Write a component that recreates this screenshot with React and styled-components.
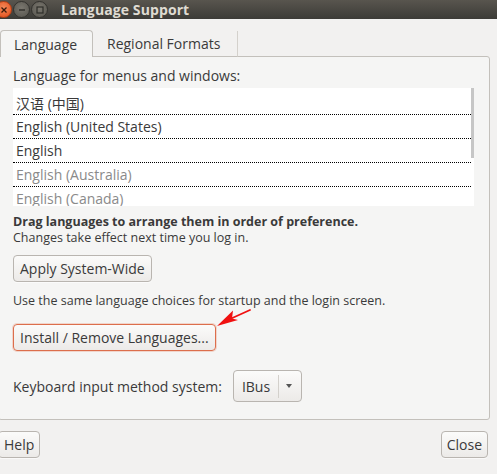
import React from "react";
import styled, { createGlobalStyle } from "styled-components";

const Global = createGlobalStyle`
  html, body { margin: 0; padding: 0; }
  body {
    width: 497px; height: 474px; overflow: hidden;
    background: #f2f1f0;
    font-family: "Open Sans", "Noto Sans CJK SC", sans-serif;
    color: #3a3a3a;
  }
`;

const Window = styled.div`
  width: 497px; height: 474px; display: flex; flex-direction: column;
  background: #f2f1f0; overflow: hidden;
`;

const TitleBar = styled.div`
  height: 19px; flex: none; display: flex; align-items: center;
  background: linear-gradient(#58554e, #3c3b37);
`;

const WinBtn = styled.div`
  width: 17px; height: 17px; border-radius: 50%; flex: none;
  margin-right: 1px; display: flex; align-items: center; justify-content: center;
  background: ${p => p.$close ? "radial-gradient(circle at 50% 40%, #f48a5a, #df4a16)" : "radial-gradient(circle at 50% 40%, #7a776f, #55534c)"};
  border: 1px solid ${p => p.$close ? "#b33d12" : "#33322e"};
  box-sizing: border-box;
  &:first-child { margin-left: -5px; }
`;

const Title = styled.div`
  margin-left: 12px; font-weight: bold; font-size: 14px; color: #dfdbd2;
  font-family: "Open Sans", sans-serif; letter-spacing: 0.1px;
`;

const TabRow = styled.div`
  display: flex; margin-top: 11px; height: 27px; flex: none; position: relative; z-index: 1;
`;

const Tab = styled.div`
  height: 26px; display: flex; align-items: center; padding: 0 0 0 ${p => p.$active ? 13 : 14}px;
  font-size: 14px; color: #3a3a3a;
  box-sizing: border-box;
  ${p => p.$active ? `
    background: #f5f5f4; border: 1px solid #c3c0bb; border-bottom: none;
    border-radius: 4px 4px 0 0; height: 27px; width: 93px;
  ` : `
    width: 145px; border-right: 1px solid #d4d1cc; border-bottom: 1px solid #c3c0bb; margin-top: 1px;
  `}
`;

const Panel = styled.div`
  margin-left: -2px; width: 492px; height: 364px; box-sizing: border-box; flex: none;
  margin-top: -1px;
  background: #f5f5f4; border: 1px solid #c3c0bb; border-radius: 0 3px 3px 3px;
  padding: 10px 0 0 14px; display: flex; flex-direction: column; position: relative;
`;

const Label = styled.div`
  font-size: 14px; line-height: 18px; height: 18px;
`;

const List = styled.div`
  margin-top: 3px; width: 461px; height: 118px; background: #fff; position: relative;
  overflow: hidden; padding-top: 3px; box-sizing: border-box;
`;

const Row = styled.div`
  height: 24px; box-sizing: border-box; padding-left: 3px; font-size: 14px;
  display: flex; align-items: center; width: 458px; flex: none;
  border-bottom: 1px dotted #000;
  color: ${p => p.$dim ? "#8a8a8a" : "#3a3a3a"};
`;

const Scroll = styled.div`
  position: absolute; right: 0; top: 0; width: 3px; height: 70px; background: #c6c6c6;
`;

const Bold = styled.div`
  margin-top: 8px; font-size: 12.5px; font-weight: bold; line-height: 16px;
`;

const Small = styled.div`
  font-size: 12.5px; line-height: 16px; margin-top: ${p => p.$mt || 0}px;
`;

const Button = styled.button`
  font-family: "Open Sans", sans-serif; font-size: 14px; color: #3a3a3a;
  height: 27px; padding: 0 6px; box-sizing: border-box; align-self: flex-start;
  background: linear-gradient(#fbfbfa, #eceae8);
  border: 1px solid ${p => p.$focus ? "#dc6e4c" : "#b9b5b0"};
  border-radius: 4px; cursor: default;
  box-shadow: ${p => p.$focus ? "0 0 0 1px rgba(233,120,80,0.25)" : "0 1px 0 rgba(255,255,255,0.6)"};
  margin-top: ${p => p.$mt || 0}px;
`;

const KbRow = styled.div`
  margin-top: 19px; display: flex; align-items: center; gap: 11px; font-size: 14px;
`;

const Combo = styled.div`
  width: 69px; height: 32px; box-sizing: border-box; border: 1px solid #b9b5b0; border-radius: 4px;
  background: linear-gradient(#fbfbfa, #eceae8); display: flex; align-items: center;
  font-size: 14px;
`;

const ComboText = styled.div`
  padding-left: 8px; width: 36px;
`;

const ComboSep = styled.div`
  width: 1px; height: 23px; background: #d3d0cb;
`;

const Arrow = styled.div`
  margin-left: 7px; width: 0; height: 0;
  border-left: 3.5px solid transparent; border-right: 3.5px solid transparent;
  border-top: 4px solid #555;
`;

const Footer = styled.div`
  display: flex; justify-content: space-between; padding: 11px 9px 0 0;
`;

const FooterBtn = styled(Button)`
  padding: 0 5px; height: 27px;
  ${p => p.$left ? "margin-left: -2px;" : ""}
`;

const RedArrow = styled.svg`
  position: absolute; left: 218px; top: 252px; overflow: visible;
`;

export default function App() {
  return (
    <>
      <Global />
      <Window>
        <TitleBar>
          <WinBtn $close>
            <svg width="8" height="8" viewBox="0 0 8 8"><path d="M1.5 1.5 L6.5 6.5 M6.5 1.5 L1.5 6.5" stroke="#3a1a0a" strokeWidth="1.3" /></svg>
          </WinBtn>
          <WinBtn>
            <svg width="8" height="8" viewBox="0 0 8 8"><path d="M1 4 H7" stroke="#2e2d29" strokeWidth="1.4" /></svg>
          </WinBtn>
          <WinBtn>
            <svg width="8" height="8" viewBox="0 0 8 8"><rect x="1" y="1" width="6" height="6" fill="none" stroke="#2e2d29" strokeWidth="1.2" /></svg>
          </WinBtn>
          <Title>Language Support</Title>
        </TitleBar>
        <TabRow>
          <Tab $active>Language</Tab>
          <Tab>Regional Formats</Tab>
        </TabRow>
        <Panel>
          <Label>Language for menus and windows:</Label>
          <List>
            <Row>汉语 (中国)</Row>
            <Row>English (United States)</Row>
            <Row>English</Row>
            <Row $dim>English (Australia)</Row>
            <Row $dim>English (Canada)</Row>
            <Scroll />
          </List>
          <Bold>Drag languages to arrange them in order of preference.</Bold>
          <Small>Changes take effect next time you log in.</Small>
          <Button $mt={9}>Apply System-Wide</Button>
          <Small $mt={11}>Use the same language choices for startup and the login screen.</Small>
          <Button $focus $mt={15}>Install / Remove Languages...</Button>
          <KbRow>
            Keyboard input method system:
            <Combo>
              <ComboText>IBus</ComboText>
              <ComboSep />
              <Arrow />
            </Combo>
          </KbRow>
          <RedArrow width="34" height="18" viewBox="0 0 34 18">
            <path d="M33 1 L12 10.5" stroke="#f01010" strokeWidth="1.8" strokeLinecap="round" />
            <path d="M0 17 L21 11 L15 9.5 L16 1.5 Z" fill="#f01010" />
          </RedArrow>
        </Panel>
        <Footer>
          <FooterBtn $left>Help</FooterBtn>
          <FooterBtn>Close</FooterBtn>
        </Footer>
      </Window>
    </>
  );
}
